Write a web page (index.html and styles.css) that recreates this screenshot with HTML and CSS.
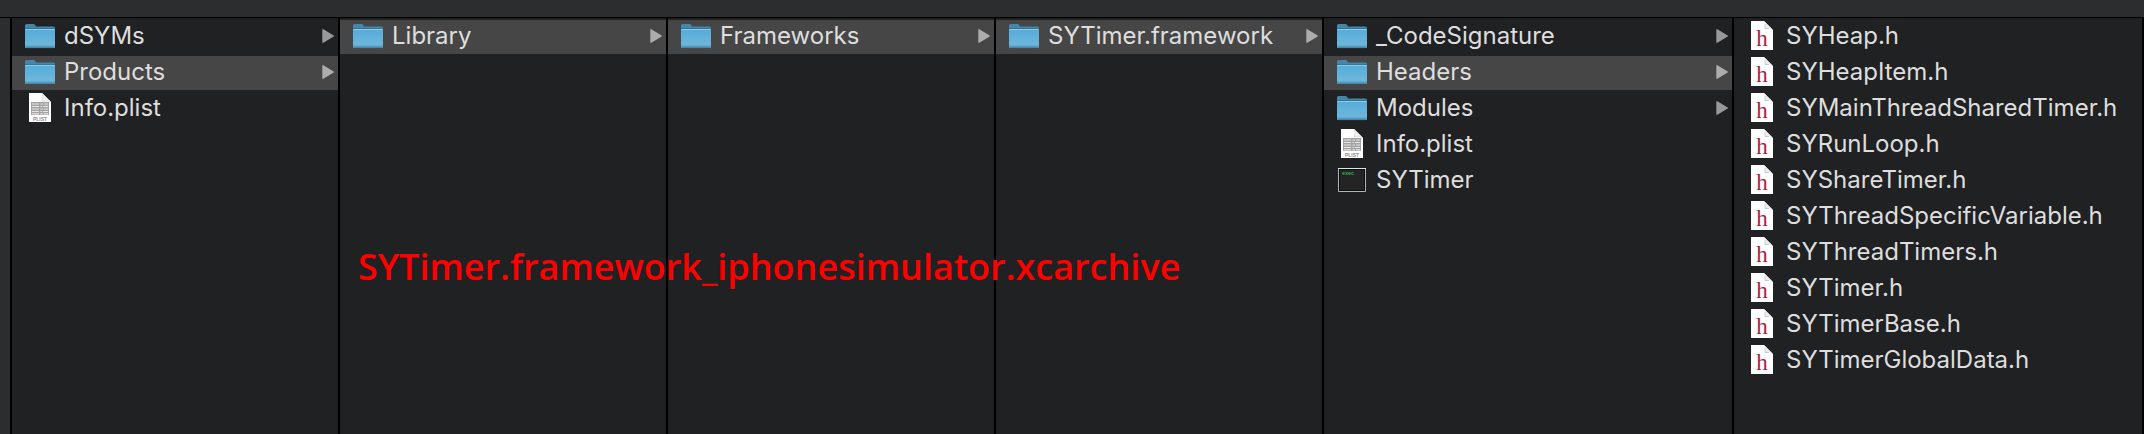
FILE: index.html
```html
<!DOCTYPE html>
<html lang="en">
<head>
  <meta charset="utf-8">
  <title>Products</title>
  <link rel="stylesheet" href="styles.css">
</head>
<body>
  <!-- shared icons -->
  <svg class="icon-defs" aria-hidden="true">
    <defs>
      <linearGradient id="folder-front" x1="0" y1="0" x2="0" y2="1">
        <stop offset="0" stop-color="#55acd9"/>
        <stop offset="1" stop-color="#71b9dc"/>
      </linearGradient>
      <symbol id="folder" viewBox="0 0 30 30">
        <path d="M0 27V4.500Q0 3 1.500 3H8.500Q9.600 3 10.200 4L11 5.500H28.500Q30 5.500 30 7V27Z" fill="#4686a8"/>
        <path d="M0 8H30V25.500Q30 26.500 29 26.500H1Q0 26.500 0 25.500Z" fill="url(#folder-front)"/>
        <path d="M0 7.500H30" stroke="#39718f" stroke-width="1"/>
        <path d="M0.500 8.500H29.500" stroke="#82cdf0" stroke-width="1"/>
        <path d="M0 24.500H30V25.500Q30 27 28.500 27H1.500Q0 27 0 25.500Z" fill="#559bbf"/>
        <path d="M1 26.700H29" stroke="#3d7796" stroke-width="0.700"/>
      </symbol>
      <symbol id="plist" viewBox="0 0 30 30">
        <path d="M4 0H17L26 9V29H4Z" fill="#fff"/>
        <path d="M17 0Q19 3 17.500 8Q23 7 26 9Z" fill="#f2f2f2" stroke="#cfcfcf" stroke-width="0.600"/>
        <path d="M6 9H24V22H6Z" fill="#a3a3a3"/>
        <path d="M7 11H14M7 13.500H14M7 16H14M7 18.500H14M7 20.800H14M15.500 11H18M15.500 13.500H17M15.500 16H18M15.500 18.500H17M15.500 20.800H18M19 11H23M18 13.500H23M19 16H23M18 18.500H23M19 20.800H23" stroke="#e6e6e6" stroke-width="1.200"/>
        <text x="15" y="27.600" class="plist-text">PLIST</text>
      </symbol>
      <symbol id="header" viewBox="0 0 30 30">
        <path d="M4 0H17L26 9V29H4Z" fill="#fff"/>
        <path d="M16 0Q20 2 18 7.500Q23 6 26 9L17 0Z" fill="#ededed"/>
        <path d="M18 3V7.500H22" fill="none" stroke="#bdbdbd" stroke-width="0.800"/>
        <text x="15" y="25" class="header-text">h</text>
      </symbol>
      <symbol id="exec" viewBox="0 0 30 30">
        <path d="M1.500 3.500H28.500V26.500H1.500Z" fill="#242424" stroke="#a9b8b8"/>
        <path d="M1 3.500H29" stroke="#d3e9e8"/>
        <path d="M2.500 4.500H27.500V25.500H2.500Z" fill="none" stroke="#0b0b0b"/>
        <text x="5" y="10" class="exec-text">exec</text>
      </symbol>
      <symbol id="arrow" viewBox="0 0 12 14">
        <path d="M1 0.800L11.300 7L1 13.200Z" fill="currentColor" stroke="currentColor" stroke-width="1.400" stroke-linejoin="round"/>
      </symbol>
    </defs>
  </svg>

  <div class="toolbar"></div>
  <main class="browser">
    <ul class="column">
      <li><a class="item" href="#"><svg class="icon"><use href="#folder"/></svg><span class="name">dSYMs</span><svg class="arrow"><use href="#arrow"/></svg></a></li>
      <li><a class="item selected" href="#"><svg class="icon"><use href="#folder"/></svg><span class="name">Products</span><svg class="arrow"><use href="#arrow"/></svg></a></li>
      <li><a class="item" href="#"><svg class="icon"><use href="#plist"/></svg><span class="name">Info.plist</span></a></li>
    </ul>
    <ul class="column">
      <li><a class="item selected" href="#"><svg class="icon"><use href="#folder"/></svg><span class="name">Library</span><svg class="arrow"><use href="#arrow"/></svg></a></li>
    </ul>
    <ul class="column">
      <li><a class="item selected" href="#"><svg class="icon"><use href="#folder"/></svg><span class="name">Frameworks</span><svg class="arrow"><use href="#arrow"/></svg></a></li>
    </ul>
    <ul class="column">
      <li><a class="item selected" href="#"><svg class="icon"><use href="#folder"/></svg><span class="name">SYTimer.framework</span><svg class="arrow"><use href="#arrow"/></svg></a></li>
    </ul>
    <ul class="column">
      <li><a class="item" href="#"><svg class="icon"><use href="#folder"/></svg><span class="name">_CodeSignature</span><svg class="arrow"><use href="#arrow"/></svg></a></li>
      <li><a class="item selected" href="#"><svg class="icon"><use href="#folder"/></svg><span class="name">Headers</span><svg class="arrow"><use href="#arrow"/></svg></a></li>
      <li><a class="item" href="#"><svg class="icon"><use href="#folder"/></svg><span class="name">Modules</span><svg class="arrow"><use href="#arrow"/></svg></a></li>
      <li><a class="item" href="#"><svg class="icon"><use href="#plist"/></svg><span class="name">Info.plist</span></a></li>
      <li><a class="item" href="#"><svg class="icon"><use href="#exec"/></svg><span class="name">SYTimer</span></a></li>
    </ul>
    <ul class="column">
      <li><a class="item" href="#"><svg class="icon"><use href="#header"/></svg><span class="name">SYHeap.h</span></a></li>
      <li><a class="item" href="#"><svg class="icon"><use href="#header"/></svg><span class="name">SYHeapItem.h</span></a></li>
      <li><a class="item" href="#"><svg class="icon"><use href="#header"/></svg><span class="name">SYMainThreadSharedTimer.h</span></a></li>
      <li><a class="item" href="#"><svg class="icon"><use href="#header"/></svg><span class="name">SYRunLoop.h</span></a></li>
      <li><a class="item" href="#"><svg class="icon"><use href="#header"/></svg><span class="name">SYShareTimer.h</span></a></li>
      <li><a class="item" href="#"><svg class="icon"><use href="#header"/></svg><span class="name">SYThreadSpecificVariable.h</span></a></li>
      <li><a class="item" href="#"><svg class="icon"><use href="#header"/></svg><span class="name">SYThreadTimers.h</span></a></li>
      <li><a class="item" href="#"><svg class="icon"><use href="#header"/></svg><span class="name">SYTimer.h</span></a></li>
      <li><a class="item" href="#"><svg class="icon"><use href="#header"/></svg><span class="name">SYTimerBase.h</span></a></li>
      <li><a class="item" href="#"><svg class="icon"><use href="#header"/></svg><span class="name">SYTimerGlobalData.h</span></a></li>
    </ul>
    <p class="note">SYTimer.framework_iphonesimulator.xcarchive</p>
  </main>
</body>
</html>
```
FILE: styles.css
```css
body {
  margin: 0;
  min-height: 100vh;
  display: flex;
  flex-direction: column;
  background-color: #2c2d2f;
  color: #dedede;
  font-family: Inter, "Liberation Sans", sans-serif;
  font-size: 24px;
  line-height: 32px;
}

.icon-defs {
  position: absolute;
  width: 0;
  height: 0;
}

.toolbar {
  height: 17px;
  border-bottom: 1px solid #000000;
}

.browser {
  position: relative;
  flex-grow: 1;
  display: grid;
  grid-template-columns: repeat(4, 328fr) repeat(2, 410fr);
  margin-left: 10px;
  border-left: 2px solid #000000;
}

.column {
  display: flex;
  flex-direction: column;
  gap: 2px;
  min-width: 0;
  margin: 0;
  padding: 2px 0 0;
  list-style: none;
  background-color: #202123;
  border-right: 2px solid #000000;
}

.item {
  display: flex;
  align-items: center;
  box-sizing: border-box;
  height: 34px;
  padding: 0 4px 2px 13px;
  color: inherit;
  text-decoration: none;
}

.selected {
  background-color: #464646;
}

.icon {
  flex-shrink: 0;
  width: 30px;
  height: 30px;
  margin-right: 9px;
}

.name {
  flex-grow: 1;
  white-space: nowrap;
}

.arrow {
  flex-shrink: 0;
  width: 12px;
  height: 14px;
  color: #999999;
}

.selected .arrow {
  color: #adadad;
}

.plist-text {
  font: bold 5px "Liberation Sans", sans-serif;
  fill: #8f8f8f;
  text-anchor: middle;
}

.header-text {
  font: 23px "Liberation Serif", serif;
  fill: #b3203c;
  text-anchor: middle;
}

.exec-text {
  font: bold 5px "Liberation Mono", monospace;
  fill: #35b04a;
}

/* red label over the columns */
.note {
  position: absolute;
  top: 223px;
  left: 346px;
  margin: 0;
  color: #ff0000;
  font-family: "Open Sans", "Noto Sans", sans-serif;
  font-size: 36px;
  font-weight: 600;
  line-height: 52px;
  white-space: nowrap;
}
```
